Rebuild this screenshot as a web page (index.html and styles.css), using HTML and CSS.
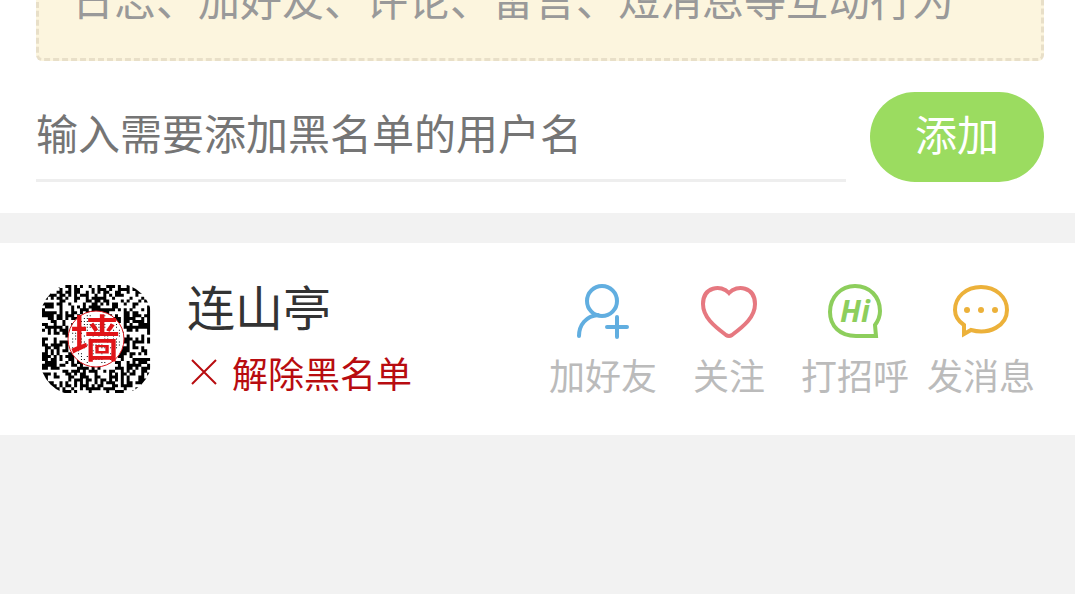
FILE: index.html
```html
<!DOCTYPE html>
<html lang="zh-CN">
<head>
    <meta charset="UTF-8">
    <meta name="viewport" content="width=device-width, initial-scale=1.0">
    <title>黑名单</title>
    <link rel="stylesheet" href="styles.css">
</head>
<body>
    <section class="panel add-panel">
        <p class="notice">日志、加好友、评论、留言、短消息等互动行为</p>
        <form class="add-form">
            <input type="text" class="username" aria-label="用户名" placeholder="输入需要添加黑名单的用户名">
            <button type="submit" class="add-btn">添加</button>
        </form>
    </section>

    <section class="panel user">
        <svg class="avatar" viewBox="0 0 112 112" aria-hidden="true">
            <path id="modules" class="modules"/>
            <circle class="seal" cx="56" cy="56" r="28"/>
            <path id="dots" class="modules"/>
            <text class="seal-text" x="55" y="74">墙</text>
        </svg>
        <div class="info">
            <div class="name">连山亭</div>
            <a href="#" class="remove">
                <svg class="cross" viewBox="0 0 36 36" aria-hidden="true"><path d="M5 6L29 30M29 6L5 30"/></svg>
                <span>解除黑名单</span>
            </a>
        </div>
        <nav class="actions">
            <a href="#" class="action">
                <svg class="icon blue" viewBox="0 0 60 60" aria-hidden="true">
                    <circle cx="29" cy="18" r="15"/>
                    <path d="M6 53C6 42 13 33 25 32M34 44H54M44 34V54"/>
                </svg>
                <span>加好友</span>
            </a>
            <a href="#" class="action">
                <svg class="icon red" viewBox="0 0 60 60" aria-hidden="true">
                    <path d="M30 10C22 1 4 4 4 21C4 34 15 43 27 52Q30 54 33 52C45 43 56 34 56 21C56 4 38 1 30 10Z"/>
                </svg>
                <span>关注</span>
            </a>
            <a href="#" class="action">
                <svg class="icon green" viewBox="0 0 60 60" aria-hidden="true">
                    <path d="M51 53H31C15 53 5 43 5 29C5 14 16 3 30 3C45 3 55 14 55 28C55 33 53 38 50 42Z"/>
                    <text x="30" y="39">Hi</text>
                </svg>
                <span>打招呼</span>
            </a>
            <a href="#" class="action">
                <svg class="icon orange" viewBox="0 0 60 60" aria-hidden="true">
                    <path d="M13 51V42C7 38 4 33 4 27C4 14 15 4 30 4C45 4 56 14 56 27C56 43 38 52 20 47Z"/>
                    <circle class="dot" cx="16" cy="27" r="3"/>
                    <circle class="dot" cx="30" cy="27" r="3"/>
                    <circle class="dot" cx="44" cy="27" r="3"/>
                </svg>
                <span>发消息</span>
            </a>
        </nav>
    </section>

    <script src="avatar.js"></script>
</body>
</html>
```

FILE: styles.css
```css
:root {
    --text-color: #333;
    --label-color: #bbb;
    --line-color: #eee;
    --green: #9bdc60;
}

* {
    box-sizing: border-box;
}

body {
    margin: 0;
    font-family: "Noto Sans CJK SC", sans-serif;
    color: var(--text-color);
    background-color: #f2f2f2;
}

a {
    text-decoration: none;
}

.panel {
    background-color: white;
    padding: 0 31px 0 36px;
}

.add-panel {
    margin-bottom: 30px;
    padding-bottom: 31px;
    overflow: hidden;
}

.notice {
    margin: -36px 0 31px;
    padding: 0 33px 30px;
    border: 3px dashed #e8dfc8;
    border-radius: 6px;
    background-color: #fcf5de;
    color: #999;
    font-size: 42px;
    line-height: 61px;
}

.add-form {
    display: flex;
    gap: 24px;
}

.username {
    flex: 1;
    min-width: 0;
    padding: 0 0 9px;
    border: none;
    border-bottom: 3px solid var(--line-color);
    outline: none;
    background: none;
    font: inherit;
    font-size: 42px;
}

.username::placeholder {
    color: #757575;
}

.add-btn {
    height: 90px;
    padding: 0 45px 9px;
    border: none;
    border-radius: 45px;
    background-color: var(--green);
    color: white;
    font: inherit;
    font-size: 42px;
    cursor: pointer;
}

.user {
    display: flex;
    align-items: center;
    min-height: 192px;
}

.avatar {
    flex: none;
    width: 112px;
    height: 112px;
    margin: 0 35px 0 4px;
    border-radius: 36px;
}

.modules {
    fill: #000;
}

.seal {
    fill: white;
    stroke: #d8171c;
    stroke-width: 1;
}

.seal-text {
    fill: #e01418;
    font-size: 50px;
    font-weight: 500;
    text-anchor: middle;
}

.info {
    flex: 1;
}

.name {
    font-size: 48px;
    line-height: 66px;
}

.remove {
    display: flex;
    align-items: center;
    gap: 9px;
    color: #b80c10;
    font-size: 36px;
    line-height: 68px;
}

.cross {
    width: 36px;
    height: 36px;
    fill: none;
    stroke: currentColor;
    stroke-width: 2;
}

.actions {
    display: grid;
    grid-template-columns: repeat(4, 126px);
    padding-top: 6px;
}

.action {
    display: flex;
    flex-direction: column;
    align-items: center;
    gap: 4px;
    color: var(--label-color);
    font-size: 36px;
    line-height: 54px;
}

.icon {
    width: 60px;
    height: 60px;
    fill: none;
    stroke: currentColor;
    stroke-width: 4;
    stroke-linecap: round;
}

.icon text {
    fill: currentColor;
    stroke: none;
    font-family: "Open Sans", sans-serif;
    font-size: 30px;
    font-style: italic;
    font-weight: bold;
    text-anchor: middle;
}

.icon .dot {
    fill: currentColor;
    stroke: none;
}

.blue {
    color: #61aee0;
}

.red {
    color: #e67880;
}

.green {
    color: #8dce5c;
}

.orange {
    color: #ecb13a;
}
```

FILE: avatar.js
```js
// QR style avatar: square modules, with small dots inside the seal
var CELLS = 37;
var size = 108 / CELLS;
var seed = 20;

function random() {
    seed = (seed * 1103515245 + 12345) % 2147483648;
    return seed / 2147483648;
}

function square(x, y, side) {
    return 'M' + x.toFixed(2) + ' ' + y.toFixed(2) + 'h' + side + 'v' + side + 'h-' + side + 'z';
}

var modules = '';
var dots = '';

for (var row = 0; row < CELLS; row++) {
    for (var col = 0; col < CELLS; col++) {
        if (random() > 0.52) continue;
        var x = 2 + col * size;
        var y = 2 + row * size;
        if (Math.hypot(x + size / 2 - 56, y + size / 2 - 56) < 26) {
            dots += square(x + 1, y + 1, 1);
        } else {
            modules += square(x, y, 3);
        }
    }
}

document.getElementById('modules').setAttribute('d', modules);
document.getElementById('dots').setAttribute('d', dots);
```
